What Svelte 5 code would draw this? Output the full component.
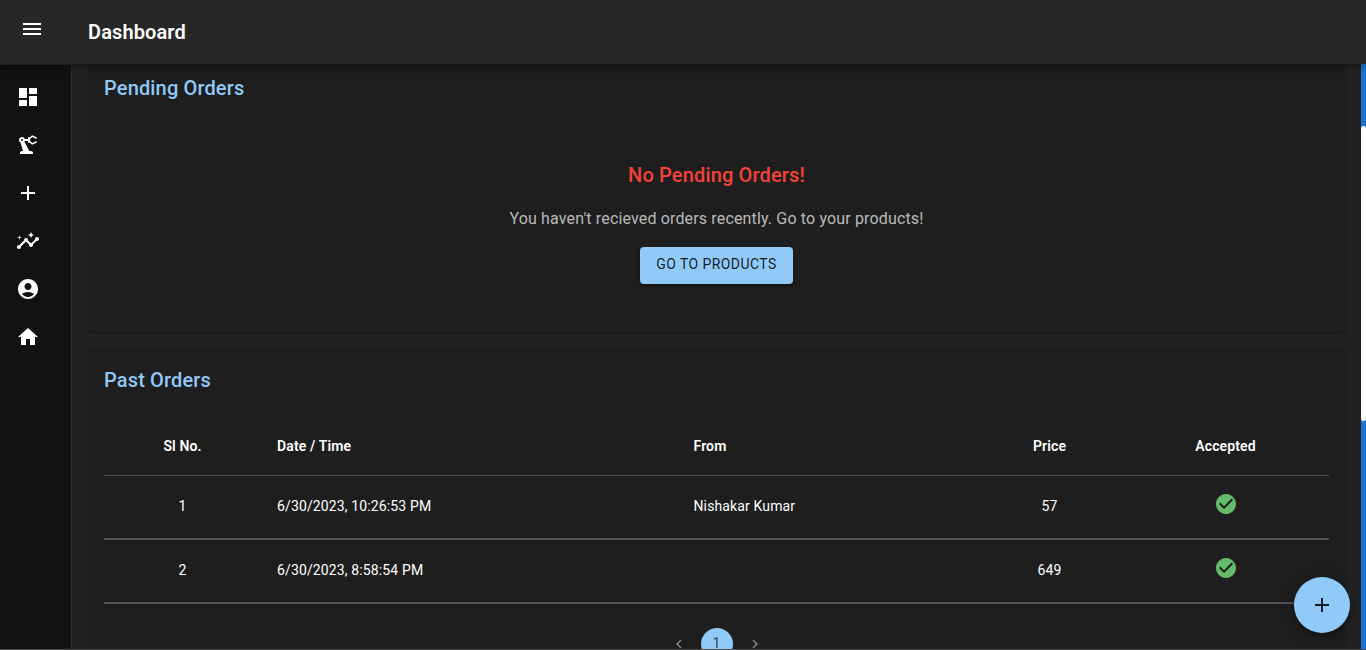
<script>
  const nav = [
    'M3 13h8V3H3v10zm0 8h8v-6H3v6zm10 0h8V11h-8v10zm0-18v6h8V3h-8z',
    'm19.93 8.35-3.6 1.68L14 7.7V6.3l2.33-2.33 3.6 1.68c.38.18.82.01 1-.36.18-.38.01-.82-.36-1l-3.92-1.83a.992.992 0 0 0-1.13.2L13.78 4.4c-.18-.24-.46-.4-.78-.4-.55 0-1 .45-1 1v1H8.82C8.4 4.84 7.3 4 6 4 4.34 4 3 5.34 3 7c0 1.1.6 2.05 1.48 2.58L7.08 18H6c-1.1 0-2 .9-2 2v1h13v-1c0-1.1-.9-2-2-2h-1.62L8.41 8.77c.17-.24.31-.49.41-.77H12v1c0 .55.45 1 1 1 .32 0 .6-.16.78-.4l1.74 1.74c.3.3.75.38 1.13.2l3.92-1.83c.38-.18.54-.62.36-1-.18-.37-.62-.54-1-.36zM6 8c-.55 0-1-.45-1-1s.45-1 1-1 1 .45 1 1-.45 1-1 1z',
    'M19 13h-6v6h-2v-6H5v-2h6V5h2v6h6v2z',
    'M21 8c-1.45 0-2.26 1.44-1.93 2.51l-3.55 3.56c-.3-.09-.74-.09-1.04 0l-2.55-2.55C12.27 10.45 11.46 9 10 9c-1.45 0-2.27 1.44-1.93 2.52l-4.56 4.55C2.44 15.74 1 16.55 1 18c0 1.1.9 2 2 2 1.45 0 2.26-1.44 1.93-2.51l4.55-4.56c.3.09.74.09 1.04 0l2.55 2.55C12.73 16.55 13.54 18 15 18c1.45 0 2.27-1.44 1.93-2.52l3.56-3.55c1.07.33 2.51-.48 2.51-1.93 0-1.1-.9-2-2-2zM15 9l.94-2.07L18 6l-2.06-.93L15 3l-.92 2.07L12 6l2.08.93zM3.5 11 4 9l2-.5L4 8l-.5-2L3 8l-2 .5L3 9z',
    'M12 2C6.48 2 2 6.48 2 12s4.48 10 10 10 10-4.48 10-10S17.52 2 12 2zm0 4c1.93 0 3.5 1.57 3.5 3.5S13.93 13 12 13s-3.5-1.57-3.5-3.5S10.07 6 12 6zm0 14c-2.03 0-4.43-.82-6.14-2.88C7.55 15.8 9.68 15 12 15s4.45.8 6.14 2.12C16.43 19.18 14.03 20 12 20z',
    'M10 20v-6h4v6h5v-8h3L12 3 2 12h3v8z'
  ];
  const menu = 'M3 18h18v-2H3v2zm0-5h18v-2H3v2zm0-7v2h18V6H3z';
  const check = 'M12 2C6.48 2 2 6.48 2 12s4.48 10 10 10 10-4.48 10-10S17.52 2 12 2zm-2 15-5-5 1.41-1.41L10 14.17l7.59-7.59L19 8l-9 9z';
  const left = 'M15.41 7.41 14 6l-6 6 6 6 1.41-1.41L10.83 12z';
  const right = 'M10 6 8.59 7.41 13.17 12l-4.58 4.59L10 18l6-6z';
  const orders = [
    { no: 1, date: '6/30/2023, 10:26:53 PM', from: 'Nishakar Kumar', price: 57 },
    { no: 2, date: '6/30/2023, 8:58:54 PM', from: '', price: 649 }
  ];
</script>

{#snippet icon(d, size = 24)}
  <svg width={size} height={size} viewBox="0 0 24 24" fill="currentColor"><path {d} /></svg>
{/snippet}

<div class="app">
  <header>
    <span class="menu">{@render icon(menu)}</span>
    <h1>Dashboard</h1>
  </header>
  <div class="body">
    <nav>
      {#each nav as d}
        <span class="item">{@render icon(d)}</span>
      {/each}
    </nav>
    <main>
      <section class="card pending">
        <h2>Pending Orders</h2>
        <div class="empty">
          <h3>No Pending Orders!</h3>
          <p>You haven't recieved orders recently. Go to your products!</p>
          <button class="go">GO TO PRODUCTS</button>
        </div>
      </section>
      <section class="card past">
        <h2>Past Orders</h2>
        <div class="table">
          <div class="row head">
            <span class="c">Sl No.</span><span>Date / Time</span><span>From</span><span class="c">Price</span><span class="c">Accepted</span>
          </div>
          {#each orders as o}
            <div class="row">
              <span class="c">{o.no}</span><span>{o.date}</span><span>{o.from}</span><span class="c">{o.price}</span>
              <span class="c ok">{@render icon(check)}</span>
            </div>
          {/each}
        </div>
        <div class="pages">
          <span class="arrow">{@render icon(left, 18)}</span>
          <span class="page">1</span>
          <span class="arrow">{@render icon(right, 18)}</span>
        </div>
      </section>
    </main>
    <div class="track"><div class="thumb"></div></div>
  </div>
  <button class="fab" aria-label="Add">{@render icon(nav[2])}</button>
</div>

<style>
  :global(body) { background: #121212; }
  .app {
    position: relative; box-sizing: border-box; width: 100%; height: 650px; overflow: hidden;
    display: flex; flex-direction: column; border-bottom: 1px solid #484848;
    font-family: Roboto, "Liberation Sans", sans-serif; color: #fff;
  }
  svg { display: block; flex: none; }
  h1, h2, h3, p { margin: 0; }
  header {
    position: relative; z-index: 2; flex: none; height: 64px; display: flex; align-items: center;
    background: #272727;
    box-shadow: 0 2px 4px -1px rgba(0,0,0,.2), 0 4px 5px rgba(0,0,0,.14), 0 1px 10px rgba(0,0,0,.12);
  }
  .menu { padding: 0 44px 6px 20px; }
  h1, h2, h3 { font-size: 20px; font-weight: 500; line-height: 32px; letter-spacing: .15px; }
  h1 { font-weight: 600; letter-spacing: .12px; }
  .body { flex: 1; min-height: 0; display: flex; }
  nav {
    box-sizing: border-box; width: 72px; flex: none; padding-top: 8px; background: #121212;
    border-right: 1px solid #2e2e2e; border-top: 1px solid #2e2e2e;
  }
  .item { display: flex; height: 48px; align-items: center; padding-left: 16px; }
  main { flex: 1; min-width: 0; padding: 0 16px; background: #222; overflow: hidden; }
  .card {
    box-sizing: border-box; background: #1e1e1e; border-radius: 4px;
    box-shadow: 0 2px 1px -1px rgba(0,0,0,.2), 0 1px 1px rgba(0,0,0,.14), 0 1px 3px rgba(0,0,0,.12);
  }
  .pending { height: 268px; padding: 8px 16px; border-radius: 0 0 4px 4px; }
  h2 { color: #90caf9; }
  .empty { display: flex; flex-direction: column; align-items: center; padding-top: 55px; }
  h3 { color: #f44336; }
  p { margin-top: 16px; font-size: 16px; line-height: 24px; letter-spacing: .15px; color: rgba(255,255,255,.7); }
  button { border: 0; font-family: inherit; color: rgba(0,0,0,.87); background: #90caf9; }
  .go {
    margin-top: 16px; height: 37px; width: 153px; padding: 0 0 3px; border-radius: 4px;
    font-size: 14px; font-weight: 400; letter-spacing: .42px; white-space: nowrap;
    box-shadow: 0 3px 1px -2px rgba(0,0,0,.2), 0 2px 2px rgba(0,0,0,.14), 0 1px 5px rgba(0,0,0,.12);
  }
  .past { height: 330px; margin-top: 16px; padding: 16px; }
  .table { margin-top: 22px; }
  .row {
    display: grid; grid-template-columns: 157px 416.5px 299.5px 145px 207px; align-items: center;
    box-sizing: border-box; height: 64px; padding-bottom: 3px;
    border-bottom: 2px solid #515151; font-size: 14px; line-height: 20px; letter-spacing: .13px;
  }
  .row.head { height: 58px; padding: 0 0 2px; border-bottom-width: 1px; font-weight: 600; letter-spacing: .13px; }
  .row > span { padding: 0 16px; }
  .row > .c { text-align: center; }
  .row > .ok { display: flex; justify-content: center; padding: 0 15px 3px 16px; color: #66bb6a; }
  .pages { display: flex; justify-content: center; align-items: center; margin-top: 24px; gap: 13px; }
  .page {
    width: 32px; height: 32px; border-radius: 50%; background: #90caf9; color: rgba(0,0,0,.7);
    font-size: 14px; line-height: 31px; text-align: center;
  }
  .arrow { color: #858585; }
  .track { width: 5px; flex: none; background: #1976d2; }
  .thumb { height: 295px; margin-top: 62px; border-radius: 3px; background: #fff; }
  .fab {
    position: absolute; z-index: 3; right: 16px; bottom: 16px; width: 56px; height: 56px;
    border-radius: 50%; padding: 0; display: flex; align-items: center; justify-content: center;
    box-shadow: 0 3px 5px -1px rgba(0,0,0,.2), 0 6px 10px rgba(0,0,0,.14), 0 1px 18px rgba(0,0,0,.12);
  }
</style>
